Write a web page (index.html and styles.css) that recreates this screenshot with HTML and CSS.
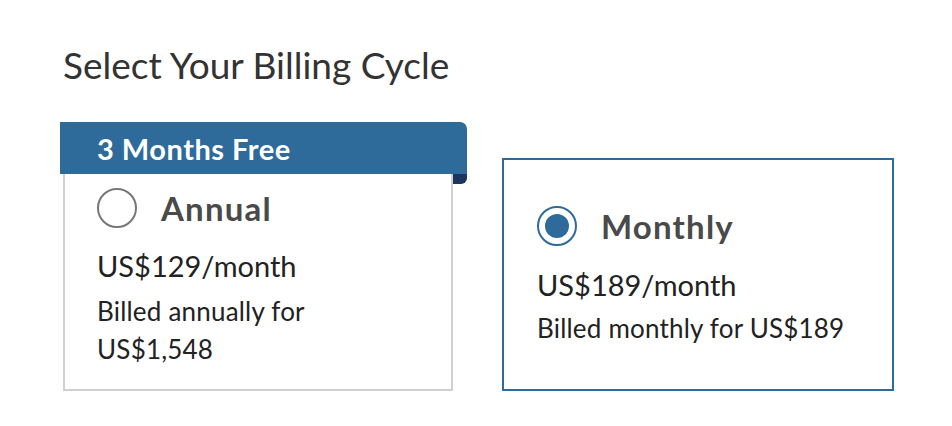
FILE: index.html
```html
<!DOCTYPE html>
<html lang="en">
<head>
    <meta charset="UTF-8">
    <title>Select Your Billing Cycle</title>
    <link rel="stylesheet" href="styles.css">
</head>
<body>

<main class="billing">
    <h1 class="billing-title">Select Your Billing Cycle</h1>

    <div class="plans">
        <div class="plan-wrap">
            <div class="plan-badge">3 Months Free</div>
            <label class="plan plan-annual">
                <div class="plan-head">
                    <span class="radio"></span>
                    <span class="plan-name">Annual</span>
                </div>
                <div class="plan-price">US$129/month</div>
                <div class="plan-note">Billed annually for<br>US$1,548</div>
            </label>
        </div>

        <label class="plan plan-monthly selected">
            <div class="plan-head">
                <span class="radio"></span>
                <span class="plan-name">Monthly</span>
            </div>
            <div class="plan-price">US$189/month</div>
            <div class="plan-note">Billed monthly for US$189</div>
        </label>
    </div>
</main>

</body>
</html>
```

FILE: styles.css
```css
body {
    margin: 0;
    background-color: #fff;
    font-family: Lato, "Liberation Sans", sans-serif;
    color: #222;
}
.billing {
    padding: 41px 0 0 60px;
}
.billing-title {
    margin: 0 0 33px 3px;
    font-size: 37px;
    line-height: 48px;
    font-weight: 400;
    color: #333;
}
.plans {
    display: flex;
    align-items: flex-end;
    gap: 35px;
}
.plan-wrap {
    width: 407px;
}
.plan-badge {
    position: relative;
    height: 52px;
    padding: 2px 0 0 37px;
    box-sizing: border-box;
    line-height: 50px;
    font-size: 29px;
    font-weight: 700;
    letter-spacing: 0.5px;
    color: #fff;
    background-color: #2e6b9a;
    border-top-right-radius: 7px;
}
/* the folded ribbon edge under the badge */
.plan-badge::after {
    content: "";
    position: absolute;
    right: 0;
    top: 100%;
    width: 14px;
    height: 10px;
    background-color: #1b355e;
    border-bottom-right-radius: 6px;
}
.plan {
    display: block;
    box-sizing: border-box;
    width: 390px;
    border: 2px solid #d0d0d0;
    background-color: #fff;
    cursor: pointer;
}
.plan-annual {
    margin-left: 3px;
    border-top: none;
    padding: 14px 32px 21px 32px;
}
.plan-monthly {
    width: 392px;
    padding: 46px 33px 42px 33px;
}
.plan.selected {
    border-color: #2e6b9a;
}
.plan-head {
    display: flex;
    align-items: center;
    gap: 24px;
    height: 40px;
}
.radio {
    width: 40px;
    height: 40px;
    box-sizing: border-box;
    border: 2px solid #777;
    border-radius: 50%;
    display: flex;
    align-items: center;
    justify-content: center;
    flex-shrink: 0;
}
.selected .radio {
    border-color: #2e6b9a;
}
.selected .radio::before {
    content: "";
    width: 24px;
    height: 24px;
    border-radius: 50%;
    background-color: #2e6b9a;
}
.plan-name {
    font-size: 33px;
    font-weight: 700;
    letter-spacing: 1.2px;
    color: #4a4a4a;
    line-height: 40px;
}
.plan-price {
    margin-top: 20px;
    font-size: 29px;
    line-height: 36px;
}
.plan-note {
    margin-top: 8px;
    font-size: 26px;
    letter-spacing: 0.2px;
    line-height: 38px;
}
.plan-monthly .plan-price {
    margin-top: 21px;
}
.plan-monthly .plan-note {
    margin-top: 6px;
}
```
